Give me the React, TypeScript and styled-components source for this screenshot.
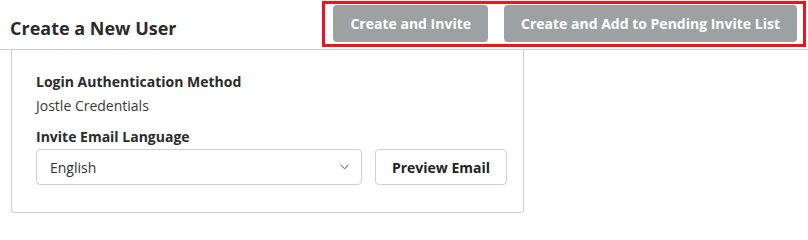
import React from "react";
import styled, { createGlobalStyle } from "styled-components";

const GlobalStyle = createGlobalStyle`
  body {
    margin: 0;
    background: #ffffff;
    font-family: "Open Sans", "Liberation Sans", sans-serif;
    color: #2b2b2b;
  }
  * {
    box-sizing: border-box;
  }
`;

const Header = styled.header`
  display: flex;
  justify-content: space-between;
  align-items: flex-start;
  height: 50px;
  padding: 0 2px 0 10px;
  border-bottom: 1px solid #cfcfcf;
`;

const Title = styled.h1`
  margin: 16px 0 0;
  font-size: 18px;
  line-height: 24px;
  font-weight: 700;
  color: #2b2b2b;
`;

const Highlight = styled.div`
  display: flex;
  gap: 16px;
  margin-top: 1px;
  padding: 1px 6px 2px 8px;
  border: 3px solid #e8161f;
`;

const ActionButton = styled.button`
  height: 37px;
  padding: 0 17px;
  border: none;
  border-radius: 4px;
  background: #9ca2a2;
  color: #ffffff;
  font-family: inherit;
  font-size: 14px;
  font-weight: 700;
  cursor: pointer;
`;

const Card = styled.section`
  width: 513px;
  margin-left: 11px;
  padding: 22px 16px 27px 24px;
  border: 1px solid #cfcfcf;
  border-top: none;
  border-radius: 0 0 4px 4px;
`;

const Label = styled.div<{ $gap?: number }>`
  margin-top: ${(p) => p.$gap ?? 0}px;
  font-size: 14px;
  line-height: 20px;
  font-weight: 700;
  color: #2b2b2b;
`;

const Value = styled.div`
  margin-top: 4px;
  font-size: 14px;
  line-height: 20px;
  color: #3a3a3a;
`;

const Row = styled.div`
  display: flex;
  gap: 13px;
  margin-top: 2px;
`;

const Select = styled.div`
  display: flex;
  align-items: center;
  justify-content: space-between;
  width: 326px;
  height: 36px;
  padding: 0 12px 0 13px;
  border: 1px solid #cfcfcf;
  border-radius: 4px;
  font-size: 14px;
  color: #333333;
`;

const SecondaryButton = styled.button`
  width: 132px;
  height: 36px;
  border: 1px solid #cfcfcf;
  border-radius: 4px;
  background: #ffffff;
  color: #222222;
  font-family: inherit;
  font-size: 14px;
  font-weight: 700;
  cursor: pointer;
`;

const Chevron = () => (
  <svg width="9" height="6" viewBox="0 0 9 6" fill="none">
    <path d="M0.5 0.8 L4.5 4.8 L8.5 0.8" stroke="#555" strokeWidth="1" />
  </svg>
);

export default function App() {
  return (
    <>
      <GlobalStyle />
      <Header>
        <Title>Create a New User</Title>
        <Highlight>
          <ActionButton type="button">Create and Invite</ActionButton>
          <ActionButton type="button">Create and Add to Pending Invite List</ActionButton>
        </Highlight>
      </Header>
      <Card>
        <Label>Login Authentication Method</Label>
        <Value>Jostle Credentials</Value>
        <Label $gap={11}>Invite Email Language</Label>
        <Row>
          <Select>
            <span>English</span>
            <Chevron />
          </Select>
          <SecondaryButton type="button">Preview Email</SecondaryButton>
        </Row>
      </Card>
    </>
  );
}
